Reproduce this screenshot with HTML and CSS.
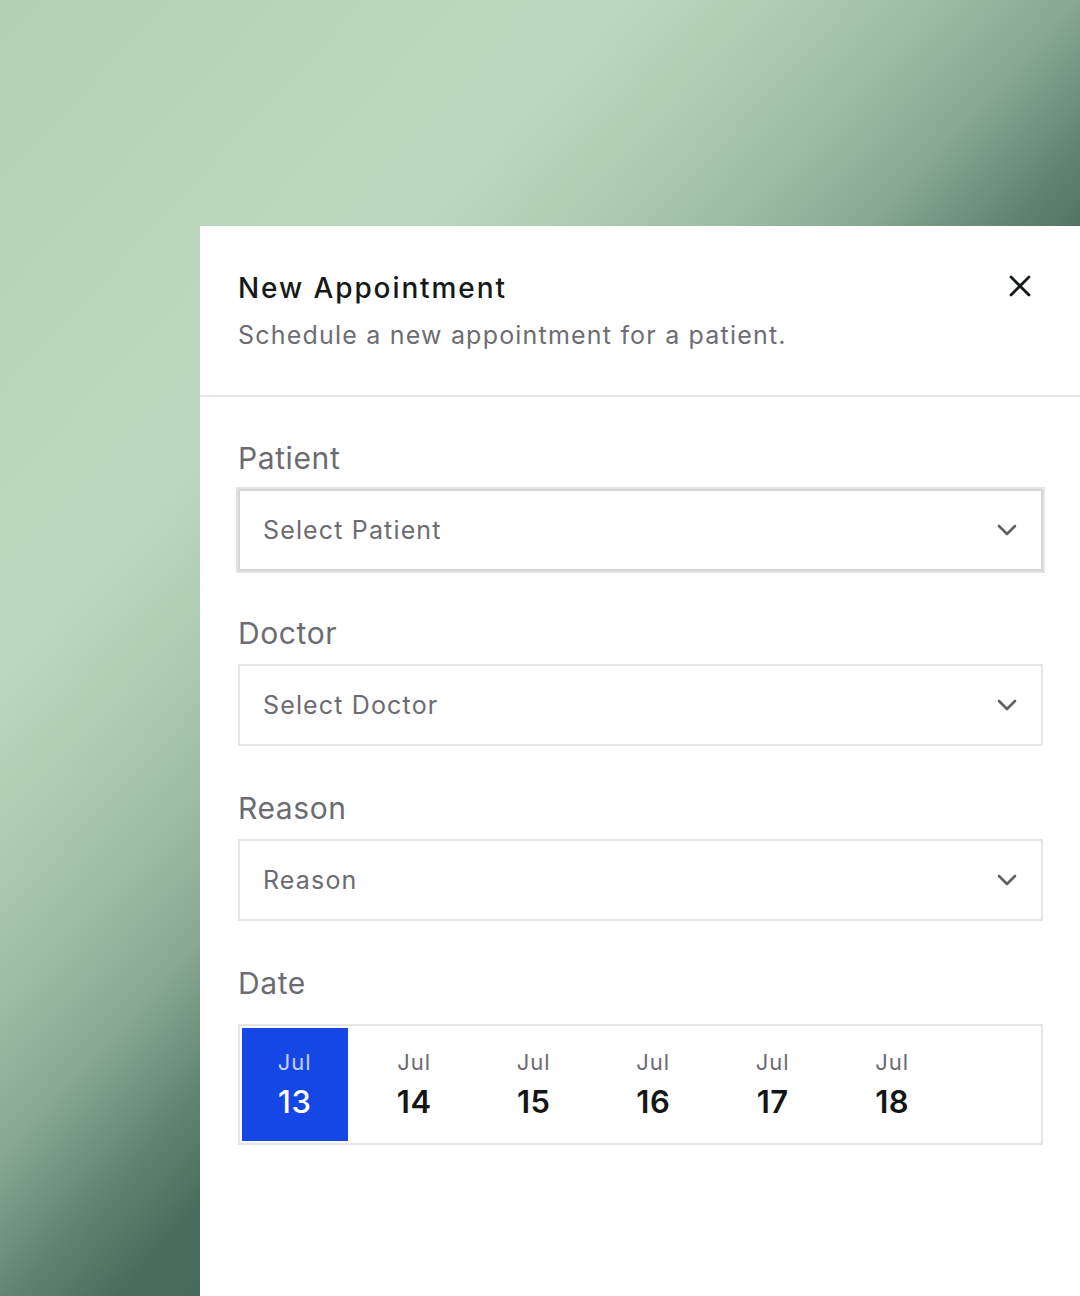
FILE: index.html
```html
<!DOCTYPE html>
<html lang="en">
<head>
    <meta charset="UTF-8">
    <meta name="viewport" content="width=device-width, initial-scale=1.0">
    <title>New Appointment</title>
    <link rel="stylesheet" href="styles.css">
</head>
<body>
    <div class="panel">
        <div class="panel-header">
            <div>
                <h1 class="title">New Appointment</h1>
                <p class="subtitle">Schedule a new appointment for a patient.</p>
            </div>
            <button class="close" aria-label="Close">
                <svg width="22" height="22" viewBox="0 0 22 22">
                    <path d="M2 2L20 20M20 2L2 20" stroke="#161a19" stroke-width="2.8" stroke-linecap="round"/>
                </svg>
            </button>
        </div>

        <div class="panel-body">
            <div class="field">
                <label class="label">Patient</label>
                <div class="select focused">
                    <span>Select Patient</span>
                    <svg class="chevron" width="20" height="12" viewBox="0 0 20 12"><path d="M2 2L10 10L18 2" fill="none" stroke="#5f5f66" stroke-width="2.6" stroke-linecap="round" stroke-linejoin="round"/></svg>
                </div>
            </div>

            <div class="field">
                <label class="label">Doctor</label>
                <div class="select">
                    <span>Select Doctor</span>
                    <svg class="chevron" width="20" height="12" viewBox="0 0 20 12"><path d="M2 2L10 10L18 2" fill="none" stroke="#5f5f66" stroke-width="2.6" stroke-linecap="round" stroke-linejoin="round"/></svg>
                </div>
            </div>

            <div class="field">
                <label class="label">Reason</label>
                <div class="select">
                    <span>Reason</span>
                    <svg class="chevron" width="20" height="12" viewBox="0 0 20 12"><path d="M2 2L10 10L18 2" fill="none" stroke="#5f5f66" stroke-width="2.6" stroke-linecap="round" stroke-linejoin="round"/></svg>
                </div>
            </div>

            <div class="field">
                <label class="label date-label">Date</label>
                <div class="dates">
                    <div class="day active"><span class="month">Jul</span><span class="num">13</span></div>
                    <div class="day"><span class="month">Jul</span><span class="num">14</span></div>
                    <div class="day"><span class="month">Jul</span><span class="num">15</span></div>
                    <div class="day"><span class="month">Jul</span><span class="num">16</span></div>
                    <div class="day"><span class="month">Jul</span><span class="num">17</span></div>
                    <div class="day"><span class="month">Jul</span><span class="num">18</span></div>
                </div>
            </div>
        </div>
    </div>
</body>
</html>
```

FILE: styles.css
```css
html, body {
    height: 100%;
}

body {
    margin: 0;
    font-family: Inter, "Noto Sans", sans-serif;
    overflow: hidden;
    background: linear-gradient(133deg, #b3d1b7 0%, #bad6bd 20%, #bbd6be 28%, #adcbb2 35%, #9dbca4 41%, #88a892 47%, #628572 53%, #4a6c5e 58%, #2e483f 100%);
    background-color: #b6d3ba;
}

.panel {
    margin-left: 200px;
    margin-top: 226px;
    width: 880px;
    height: 1070px;
    background-color: #fff;
}

.panel-header {
    display: flex;
    justify-content: space-between;
    align-items: flex-start;
    padding: 45px 38px 44px 38px;
    border-bottom: 2px solid #e7e7e9;
}

.title {
    margin: 0;
    font-size: 28px;
    line-height: 34px;
    font-weight: 500;
    color: #15191a;
    letter-spacing: 1.9px;
}

.subtitle {
    margin: 14px 0 0 0;
    font-size: 25px;
    line-height: 32px;
    color: #6d6d74;
    letter-spacing: 1.2px;
}

.close {
    background: none;
    border: none;
    padding: 0;
    margin: 4px 11px 0 0;
    width: 22px;
    height: 22px;
    cursor: pointer;
}

.panel-body {
    padding: 43px 37px 0 38px;
}

.field {
    margin-bottom: 44px;
}

.label {
    display: block;
    font-size: 30px;
    line-height: 36px;
    color: #6b6b72;
    margin-bottom: 13px;
    letter-spacing: 0.6px;
}

.date-label {
    margin-bottom: 23px;
}

.select {
    display: flex;
    justify-content: space-between;
    align-items: center;
    height: 78px;
    padding: 0 24px 0 23px;
    border: 2px solid #e5e5e8;
    font-size: 25px;
    color: #6b6b72;
    letter-spacing: 1.15px;
}

.select.focused {
    border-color: #d6d6da;
    box-shadow: 0 0 0 2px #e3e3e6;
}

.dates {
    display: flex;
    gap: 14px;
    padding: 2px;
    border: 2px solid #e5e5e8;
}

.day {
    width: 105.5px;
    height: 113px;
    display: flex;
    flex-direction: column;
    align-items: center;
    justify-content: center;
    gap: 9px;
}

.month {
    font-size: 22px;
    line-height: 26px;
    color: #6b6b72;
    letter-spacing: 1px;
}

.num {
    font-size: 31px;
    line-height: 36px;
    font-weight: 600;
    color: #121617;
    letter-spacing: 0.5px;
}

.day.active {
    background-color: #1546e6;
}

.day.active .month {
    color: #c6d2fa;
}

.day.active .num {
    color: #fff;
    font-weight: 500;
}
```
